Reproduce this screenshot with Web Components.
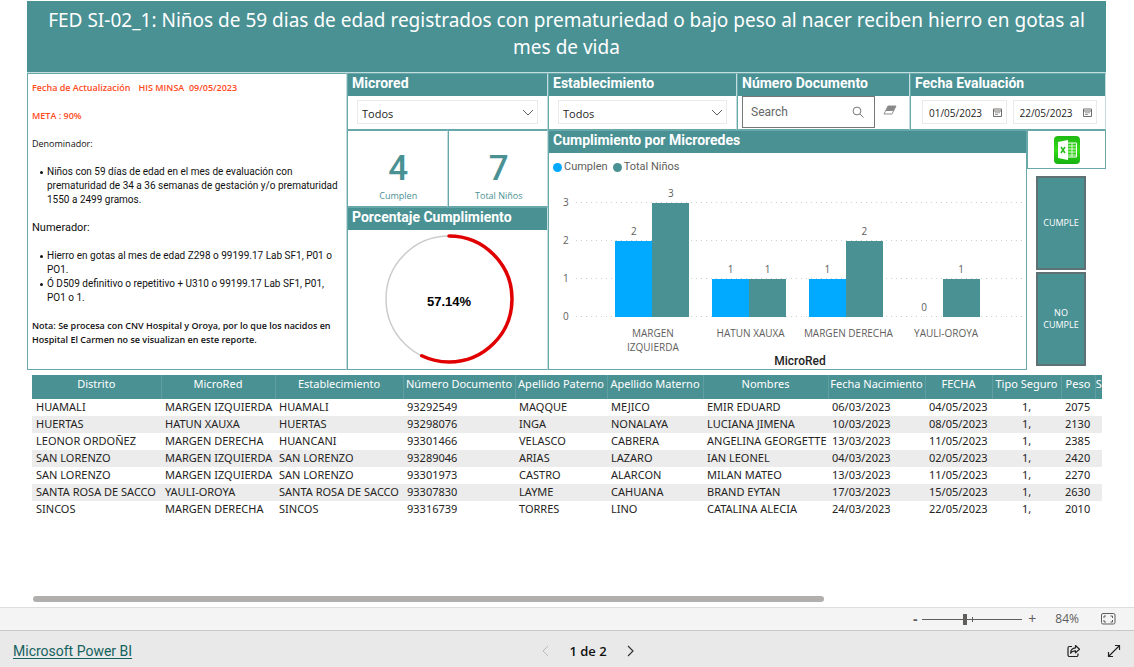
<!DOCTYPE html>
<html lang="es">
<head>
<meta charset="utf-8">
<meta name="viewport" content="width=device-width, initial-scale=1">
<title>FED SI-02_1</title>
<style>
  :root { --teal:#4a9194; --line:#69a8aa; --pale:#c3dcdd; --text:#252423; }
  html, body { margin:0; }
  body { background:#fff; color:var(--text); font:11px/17px "Noto Sans","Open Sans",sans-serif; }
</style>
</head>
<body>
<report-app></report-app>
<script>
const define = (name, html, setup) => {
  const tpl = document.createElement('template');
  tpl.innerHTML = '<style>*{box-sizing:border-box}</style>' + html;
  customElements.define(name, class extends HTMLElement {
    connectedCallback() {
      if (this.shadowRoot) return;
      const root = this.attachShadow({ mode: 'open' });
      root.append(tpl.content.cloneNode(true));
      if (setup) setup(root, this);
    }
  });
};

/* Titled panel with a teal caption bar */
define('titled-panel', `
<style>
  :host{display:flex;flex-direction:column;min-width:0;border:1px solid var(--line);border-right-color:var(--pale);box-sizing:border-box;background:#fff}
  h2{margin:0;flex:none;height:22px;padding:0 4px;background:var(--teal);color:#fff;font:700 14px/18px Roboto,sans-serif;white-space:nowrap}
  .body{flex:1;min-width:0;display:flex;flex-direction:column}
</style>
<h2></h2><div class="body"><slot></slot></div>`, (r, el) => {
  r.querySelector('h2').textContent = el.getAttribute('caption');
});

/* Drop-down filter */
define('filter-select', `
<style>
  :host{display:block;padding:4px 9px}
  label{display:block;position:relative}
  select{appearance:none;display:block;width:100%;height:24px;border:1px solid #eaeaea;border-radius:0;background:#fff;color:var(--text);font:11px "Open Sans",sans-serif;padding:2px 4px 0;margin:0}
  svg{position:absolute;right:4px;top:9px;pointer-events:none}
</style>
<label><select><option>Todos</option></select>
<svg width="12" height="8" viewBox="0 0 12 8" fill="none" stroke="#605e5c"><path d="M1 1l5 5 5-5"/></svg></label>`, (r, el) => {
  r.querySelector('select').setAttribute('aria-label', el.getAttribute('label'));
});

/* Document number search */
define('document-search', `
<style>
  :host{display:flex;align-items:flex-start;padding:0 12px 0 4px;gap:8px}
  .box{flex:1;min-width:0;display:flex;align-items:center;height:32px;border:1px solid #777;padding:0 10px 0 8px;background:#fff}
  input{flex:1;width:0;min-width:0;border:0;outline:0;background:none;padding:0;font:12px Roboto,sans-serif;color:var(--text)}
  input::placeholder{color:#666;opacity:1}
  button{border:0;background:none;padding:0;margin:8px 0 0;height:14px;line-height:0}
</style>
<div class="box"><input type="text" placeholder="Search" aria-label="Número Documento">
<svg width="12" height="12" viewBox="0 0 12 12" fill="none" stroke="#777"><circle cx="5" cy="5" r="3.9"/><path d="M8 8l3.500 3.500"/></svg></div>
<button aria-label="Borrar"><svg width="14" height="12" viewBox="0 0 14 12"><path d="M5 1h8L9 9H1z" fill="#fff" stroke="#777" stroke-width=".8"/><path d="M5 1h8l-2.600 5H2.600z" fill="#888"/></svg></button>`);

/* Date range */
define('date-range', `
<style>
  :host{display:flex;gap:6px;padding:4px 8px 4px 11px}
  label{flex:1;min-width:0;display:flex;align-items:center;height:24px;border:1px solid #eaeaea;padding:0 4px 0 6px}
  input{flex:1;width:0;min-width:0;border:0;padding:2px 0 0;background:none;color:var(--text);font:10px "Open Sans",sans-serif}
</style>
<label><input type="text" value="01/05/2023" aria-label="Desde"><svg width="9" height="9" viewBox="0 0 9 9" fill="none" stroke="#605e5c"><path d="M.5 1h8v7.500h-8zM.5 3h8" stroke-width=".9"/><path d="M2 4.800h5M2 6.500h3" stroke="#999"/></svg></label>
<label><input type="text" value="22/05/2023" aria-label="Hasta"><svg width="9" height="9" viewBox="0 0 9 9" fill="none" stroke="#605e5c"><path d="M.5 1h8v7.500h-8zM.5 3h8" stroke-width=".9"/><path d="M2 4.800h5M2 6.500h3" stroke="#999"/></svg></label>`);

define('kpi-card', `
<style>
  :host{flex:1;display:flex;flex-direction:column;align-items:center;justify-content:flex-end;height:77px;padding:0 0 3px 2px;border:1px solid var(--line);border-right-color:var(--pale);box-sizing:border-box;color:var(--teal)}
  b{font:500 35px/40px Roboto,sans-serif}
  span{font:9px/14px "Open Sans",sans-serif}
</style>
<b><slot></slot></b><span></span>`, (r, el) => { r.querySelector('span').textContent = el.getAttribute('label'); });

define('percent-ring', `
<style>
  :host{display:flex;justify-content:center;padding:2px 0 0 2px}
  text{font:700 13px "Liberation Sans",sans-serif}
</style>
<svg width="134" height="134" viewBox="0 0 134 134" role="img" aria-label="Cumplimiento">
  <circle cx="67" cy="67" r="63" fill="none" stroke="#ccc" stroke-width="1.500"/>
  <circle cx="67" cy="67" r="63" fill="none" stroke="#e00000" stroke-width="3.500" pathLength="100" stroke-dasharray="57.14 100" stroke-linecap="round" transform="rotate(-90 67 67)"/>
  <text x="67" y="74" text-anchor="middle">57.14%</text>
</svg>`);

define('bar-chart', `
<style>
  :host{display:flex;flex-direction:column;flex:1;color:#605e5c;font:10px/14px "Open Sans",sans-serif}
  .legend{display:flex;gap:5px;padding:5px 4px 0;font:11px/18px Roboto,sans-serif}
  .legend span{display:flex;align-items:center;gap:2px}
  .legend i{width:9px;height:9px;border-radius:50%}
  .a{background:#01a9ff}.b{background:var(--teal)}
  .main{display:grid;grid-template-columns:27px 1fr;padding:26px 2px 0 0}
  .axis{display:grid;grid-template-rows:repeat(4,38px);margin-top:-7px;height:122px;padding-left:14px}
  .plot{display:flex;height:115px;padding:0 33px 0 28px;
    background:repeating-linear-gradient(90deg,#fff0 0 1px,#fff 1px 5px),repeating-linear-gradient(#d0d0d0 0 1px,#fff 1px 38px)}
  .cat{flex:1;min-width:0;display:flex;justify-content:center;align-items:flex-end}
  .col{width:37px;text-align:center}
  .col i{display:block;height:calc(var(--v)*38px)}
  .col b{display:block;font-weight:400;margin-bottom:3px}
  .names{display:flex;padding:9px 31px 0 55px;text-align:center;height:37px}
  .names span{flex:1;min-width:0;padding:0 3px}
  .title{text-align:center;font:500 12px/14px Roboto,sans-serif;padding-left:25px;color:var(--text)}
</style>
<div class="legend"><span><i class="a"></i>Cumplen</span><span><i class="b"></i>Total Niños</span></div>
<div class="main"><div class="axis"><span>3</span><span>2</span><span>1</span><span>0</span></div><div class="plot"></div></div>
<div class="names"></div><div class="title">MicroRed</div>`, r => {
  const data = [['MARGEN IZQUIERDA', 2, 3], ['HATUN XAUXA', 1, 1], ['MARGEN DERECHA', 1, 2], ['YAULI-OROYA', 0, 1]];
  const bar = (v, c) => `<div class="col"><b>${v}</b><i class="${c}" style="--v:${v}"></i></div>`;
  r.querySelector('.plot').innerHTML = data.map(d => `<div class="cat">${bar(d[1], 'a')}${bar(d[2], 'b')}</div>`).join('');
  r.querySelector('.names').innerHTML = data.map(d => `<span>${d[0]}</span>`).join('');
});

define('report-note', `
<style>
  :host{display:block;border:1px solid var(--line);border-right-color:var(--pale);box-sizing:border-box;padding:7px 4px 6px;font:10px/14px Roboto,sans-serif;color:#111}
  p{margin:0 0 14px}
  .strong{font:600 9px/14px "Open Sans",sans-serif}
  .red{color:#ff4a1c}
  .gap{margin-left:8px}
  .small{font:9px/14px "Open Sans",sans-serif}
  .big{font-size:11px}
  ul{margin:0 0 14px;padding-left:15px;list-style:none}
  li{position:relative}
  li::before{content:"";position:absolute;left:-7px;top:6px;width:3px;height:3px;border-radius:50%;background:#111}
</style>
<p class="strong red">Fecha de Actualización<span class="gap">HIS MINSA&nbsp; 09/05/2023</span></p>
<p class="strong red">META : 90%</p>
<p class="small">Denominador:</p>
<ul><li>Niños con 59 días de edad en el mes de evaluación con prematuridad de 34 a 36 semanas de gestación y/o prematuridad 1550 a 2499 gramos.</li></ul>
<p class="big">Numerador:</p>
<ul><li>Hierro en gotas al mes de edad Z298 o 99199.17 Lab SF1, P01 o PO1.</li><li>Ó D509 definitivo o repetitivo + U310 o 99199.17 Lab SF1, P01, PO1 o 1.</li></ul>
<p class="strong">Nota: Se procesa con CNV Hospital y Oroya, por lo que los nacidos en Hospital El Carmen no se visualizan en este reporte.</p>`);

define('side-actions', `
<style>
  :host{display:flex;flex-direction:column}
  .xl{display:flex;justify-content:center;align-items:center;height:39px;border:1px solid var(--line);padding:0;background:#fff}
  .act{width:50px;height:94px;margin:7px 0 0 9px;border:2px solid #5f7172;background:var(--teal);color:#fff;font:9px/12px "Open Sans",sans-serif;padding:0}
  .act + .act{margin-top:2px}
</style>
<button class="xl" aria-label="Exportar a Excel"><svg width="28" height="30" viewBox="0 0 28 30">
<defs><linearGradient id="g" x2="0" y2="1"><stop offset="0" stop-color="#1fb814"/><stop offset=".5" stop-color="#35dc18"/><stop offset="1" stop-color="#14b012"/></linearGradient></defs>
<rect x="1" y="1" width="26" height="28" rx="4" fill="url(#g)"/>
<path d="M15 8h8.500v14H15" fill="none" stroke="#fff"/><path d="M19 8v14M15 11h8M15 14h8M15 17h8M15 20h8" stroke="#fff" stroke-width=".8"/>
<path d="M5 7l10-2v20L5 23z" fill="#fff"/><path d="M8 12l4 6M12 12l-4 6" stroke="#23bb16" stroke-width="1.500"/></svg></button>
<button class="act">CUMPLE</button><button class="act">NO<br>CUMPLE</button>`);

define('data-grid', `
<style>
  :host{display:block;padding:0 4px 0 5px}
  .clip{overflow:hidden}
  table{border-collapse:collapse;table-layout:fixed;width:100%}
  th{height:24px;padding:2px 0 0;background:var(--teal);color:#fff;font-weight:400;line-height:14px;vertical-align:top;white-space:nowrap;overflow:hidden;border-left:1px solid #5f9fa2}
  th:first-child{border-left:0}
  td{height:17px;padding:0 0 0 4px;line-height:16px;white-space:nowrap;overflow:hidden;vertical-align:top}
  tbody tr:nth-child(even){background:#ececec}
  td:nth-child(10){text-align:center;padding-right:4px}
</style>
<div class="clip"><table><colgroup></colgroup><thead><tr></tr></thead><tbody></tbody></table></div>`, r => {
  const cols = [['Distrito',129],['MicroRed',114],['Establecimiento',128],['Número Documento',112],['Apellido Paterno',92],['Apellido Materno',96],['Nombres',125],['Fecha Nacimiento',97],['FECHA',67],['Tipo Seguro',69],['Peso',34],['S',7]];
  const total = cols.reduce((s, c) => s + c[1], 0);
  const rows = `HUAMALI|MARGEN IZQUIERDA|HUAMALI|93292549|MAQQUE|MEJICO|EMIR EDUARD|06/03/2023|04/05/2023|1,|2075
HUERTAS|HATUN XAUXA|HUERTAS|93298076|INGA|NONALAYA|LUCIANA JIMENA|10/03/2023|08/05/2023|1,|2130
LEONOR ORDOÑEZ|MARGEN DERECHA|HUANCANI|93301466|VELASCO|CABRERA|ANGELINA GEORGETTE|13/03/2023|11/05/2023|1,|2385
SAN LORENZO|MARGEN IZQUIERDA|SAN LORENZO|93289046|ARIAS|LAZARO|IAN LEONEL|04/03/2023|02/05/2023|1,|2420
SAN LORENZO|MARGEN IZQUIERDA|SAN LORENZO|93301973|CASTRO|ALARCON|MILAN MATEO|13/03/2023|11/05/2023|1,|2270
SANTA ROSA DE SACCO|YAULI-OROYA|SANTA ROSA DE SACCO|93307830|LAYME|CAHUANA|BRAND EYTAN|17/03/2023|15/05/2023|1,|2630
SINCOS|MARGEN DERECHA|SINCOS|93316739|TORRES|LINO|CATALINA ALECIA|24/03/2023|22/05/2023|1,|2010`;
  r.querySelector('colgroup').innerHTML = cols.map(c => `<col style="width:${c[1] / total * 100}%">`).join('');
  r.querySelector('thead tr').innerHTML = cols.map(c => `<th scope="col">${c[0]}</th>`).join('');
  r.querySelector('tbody').innerHTML = rows.split('\n').map(l => '<tr>' + l.split('|').map(v => `<td>${v}</td>`).join('') + '<td></td></tr>').join('');
});

define('zoom-bar', `
<style>
  :host{display:flex;align-items:center;justify-content:flex-end;height:23px;border-top:1px solid #ddd;box-sizing:border-box;background:#f4f4f4;padding-right:18px;color:#605e5c}
  button{border:0;background:none;padding:0;color:inherit;font:700 14px/20px "Open Sans",sans-serif;width:10px}
  .plus{margin-left:5px;font-weight:400}
  input{appearance:none;margin:0 0 0 2px;width:100px;height:20px;background:linear-gradient(#605e5c,#605e5c) 50% 50%/1px 5px no-repeat,linear-gradient(#605e5c,#605e5c) 0 50%/100% 1px no-repeat}
  input::-webkit-slider-thumb{appearance:none;width:4px;height:11px;background:#605e5c;border-radius:0}
  output{font:12px/20px "Open Sans",sans-serif;margin:0 22px 0 18px}
  .fit{width:15px;line-height:0}
</style>
<button aria-label="Alejar">-</button><input type="range" min="0" max="200" value="84" aria-label="Zoom"><button class="plus" aria-label="Acercar">+</button><output>84%</output>
<button class="fit" aria-label="Ajustar"><svg width="15" height="12" viewBox="0 0 15 12" fill="none" stroke="#605e5c"><rect x=".5" y=".5" width="13.500" height="10.500" rx="1.500"/><path d="M3 5V3h2M9.500 3h2v2M3 7v2h2M9.500 9h2V7"/></svg></button>`);

define('embed-footer', `
<style>
  :host{display:grid;grid-template-columns:528fr 94px 486fr;align-items:center;height:37px;border-top:1px solid #c8c8c8;box-sizing:border-box;background:#e9e9e9;padding:4px 13px 0}
  a{font:14px/20px Roboto,sans-serif;color:#14625d;text-decoration:underline;text-underline-offset:2px}
  nav{display:flex;align-items:center;justify-content:space-between;font:600 13px/20px "Open Sans",sans-serif;color:#111}
  .tools{display:flex;justify-content:flex-end;gap:26px}
  button{border:0;background:none;padding:0;line-height:0}
</style>
<div><a href="#">Microsoft Power BI</a></div>
<nav aria-label="Páginas"><button aria-label="Anterior"><svg width="10" height="12" viewBox="0 0 10 12" fill="none" stroke="#bbb"><path d="M7 1L2 6l5 5"/></svg></button><span>1 de 2</span><button aria-label="Siguiente"><svg width="10" height="12" viewBox="0 0 10 12" fill="none" stroke="#333" stroke-width="1.200"><path d="M3 1l5 5-5 5"/></svg></button></nav>
<div class="tools"><button aria-label="Compartir"><svg width="14" height="14" viewBox="0 0 14 14" fill="none" stroke="#222" stroke-width="1.200"><path d="M5 2.500H2.500a1.500 1.500 0 0 0-1.500 1.500v7a1.500 1.500 0 0 0 1.500 1.500h7a1.500 1.500 0 0 0 1.500-1.500v-1.500"/><path d="M8.500 1.500l4 3.700-4 3.700V6.800C6 6.600 4.600 7.500 3.600 9.200c.1-3 1.700-5.200 4.900-5.400z" stroke-linejoin="round"/></svg></button>
<button aria-label="Pantalla completa"><svg width="14" height="14" viewBox="0 0 14 14" fill="none" stroke="#222" stroke-width="1.200"><path d="M1.500 12.500l11-11M8 1.500h4.500V6M1.500 8v4.500H6"/></svg></button></div>`);

define('report-app', `
<style>
  :host{display:flex;flex-direction:column;min-height:100vh}
  main{flex:1;display:flex;flex-direction:column;padding:1px 28px 4px 27px}
  h1{margin:0;padding:6px 4px 11px;background:var(--teal);color:#fff;text-align:center;font:400 19px/27px "Noto Sans",sans-serif;border-bottom:1px solid var(--pale)}
  .dash{display:grid;grid-template-columns:320fr 201fr 558fr;min-height:297px}
  .mid,.right{display:flex;flex-direction:column;min-width:0}
  .mid titled-panel:first-child{height:57px}
  .kpis{display:flex}
  .mid titled-panel:last-child{flex:1}
  .filters{display:grid;grid-template-columns:189fr 173fr 196fr;height:57px}
  .lower{flex:1;display:grid;grid-template-columns:479fr 79fr}
  .lower titled-panel{border-right-color:var(--line)}
  data-grid{margin-top:5px}
  .scroll{margin:auto 4px 0 6px;height:7px}
  .scroll div{width:74%;height:6px;border-radius:3px;background:#b0afae}
</style>
<main>
  <h1>FED SI-02_1: Niños de 59 dias de edad registrados con prematuriedad o bajo peso al nacer reciben hierro en gotas al mes de vida</h1>
  <section class="dash">
    <report-note></report-note>
    <div class="mid">
      <titled-panel caption="Microred"><filter-select label="Microred"></filter-select></titled-panel>
      <div class="kpis"><kpi-card label="Cumplen">4</kpi-card><kpi-card label="Total Niños">7</kpi-card></div>
      <titled-panel caption="Porcentaje Cumplimiento"><percent-ring></percent-ring></titled-panel>
    </div>
    <div class="right">
      <div class="filters">
        <titled-panel caption="Establecimiento"><filter-select label="Establecimiento"></filter-select></titled-panel>
        <titled-panel caption="Número Documento"><document-search></document-search></titled-panel>
        <titled-panel caption="Fecha Evaluación"><date-range></date-range></titled-panel>
      </div>
      <div class="lower">
        <titled-panel caption="Cumplimiento por Microredes"><bar-chart></bar-chart></titled-panel>
        <side-actions></side-actions>
      </div>
    </div>
  </section>
  <data-grid></data-grid>
  <div class="scroll"><div></div></div>
</main>
<zoom-bar></zoom-bar>
<embed-footer></embed-footer>`);
</script>
</body>
</html>
